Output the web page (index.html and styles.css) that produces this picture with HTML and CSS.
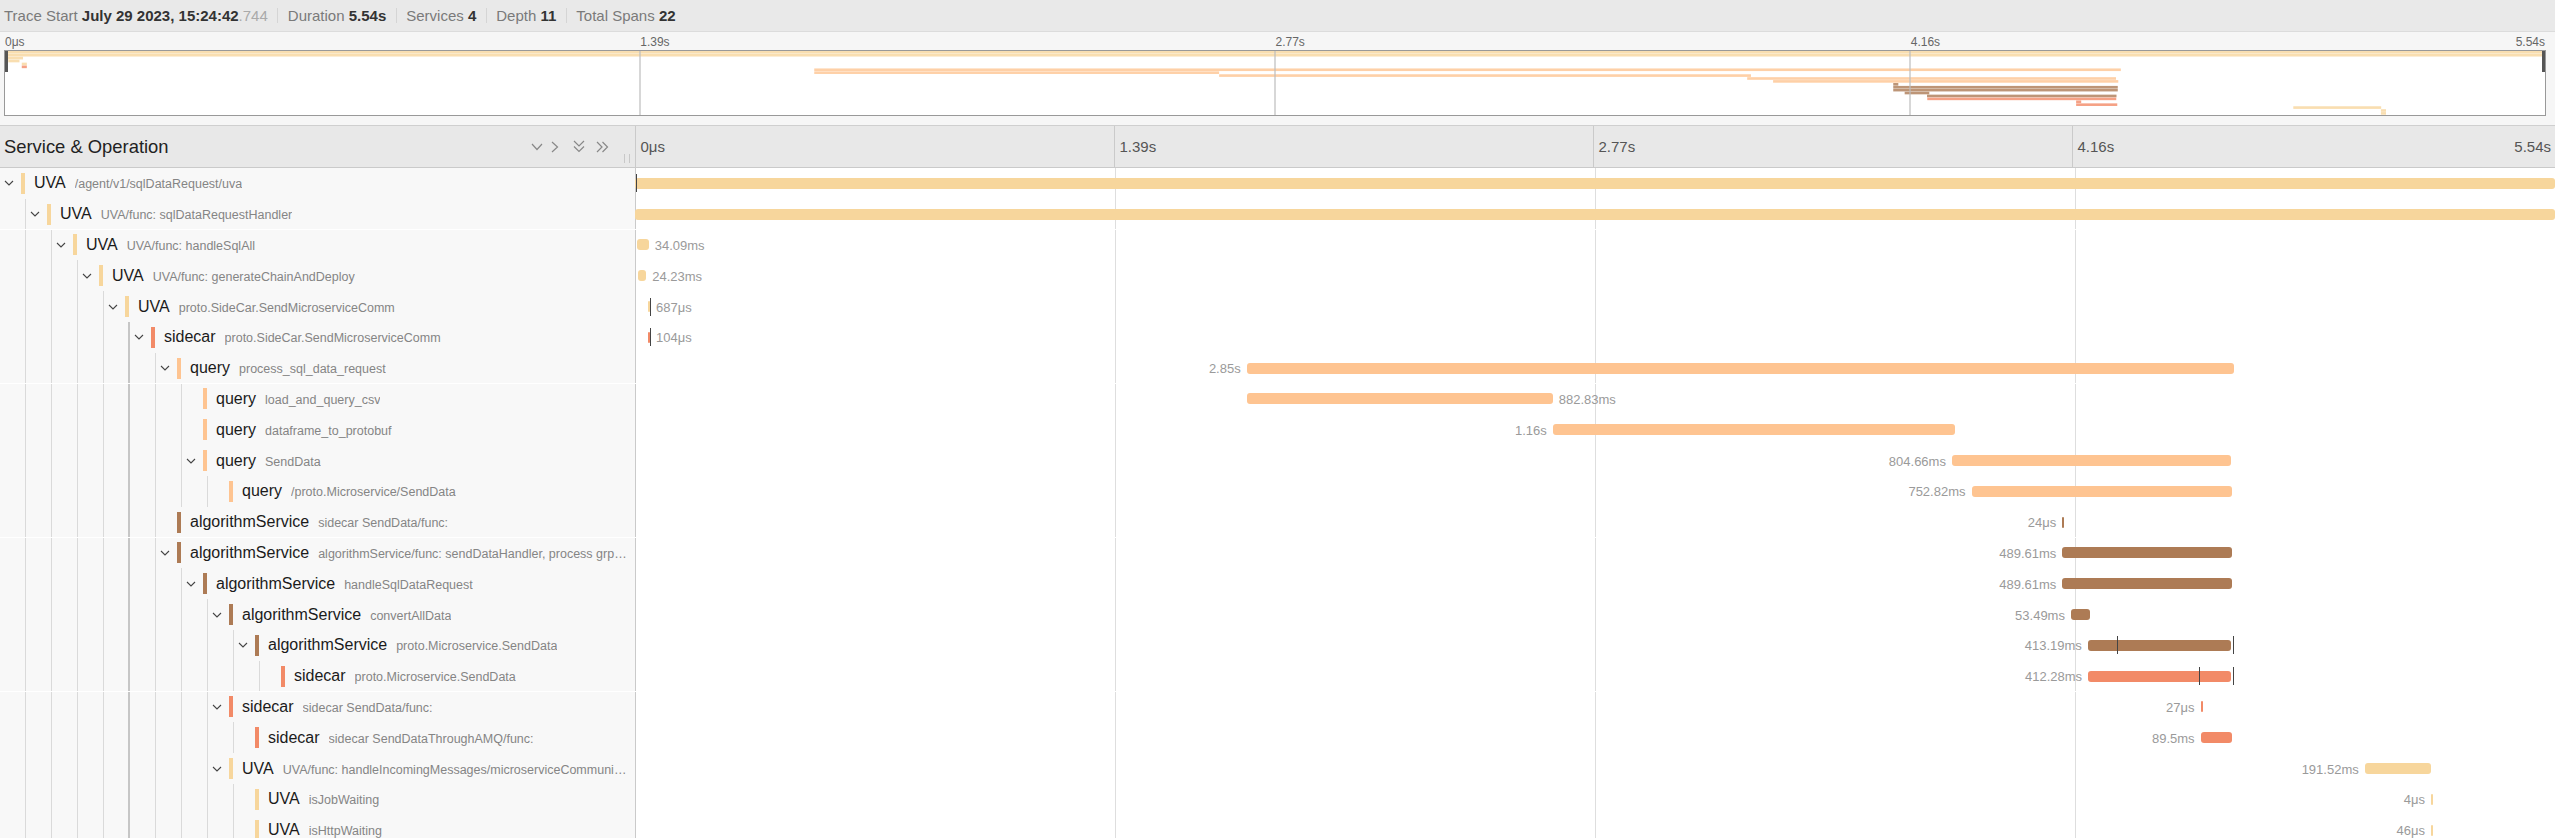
FILE: index.html
```html
<!DOCTYPE html>
<html>
<head>
<meta charset="utf-8">
<title>Trace</title>
<link rel="stylesheet" href="styles.css">
</head>
<body>
<header class="trace-header">
  <div class="hitem">Trace Start <b>July 29 2023, 15:24:42</b><span class="ms">.744</span></div>
  <div class="hitem">Duration <b>5.54s</b></div>
  <div class="hitem">Services <b>4</b></div>
  <div class="hitem">Depth <b>11</b></div>
  <div class="hitem">Total Spans <b>22</b></div>
</header>

<section class="minimap">
  <div class="mm-ticks">
    <div class="mm-tick">0μs</div>
    <div class="mm-tick">1.39s</div>
    <div class="mm-tick">2.77s</div>
    <div class="mm-tick last"><span>4.16s</span><span>5.54s</span></div>
  </div>
  <div class="mm-box">
    <svg viewBox="0 0 1000 22" preserveAspectRatio="none">
      <g fill-opacity="0.8">
        <rect class="c-uva" x="0" y="0" width="1000" height="0.9"/>
        <rect class="c-uva" x="0" y="1" width="1000" height="0.9"/>
        <rect class="c-uva" x="0.9" y="2" width="6.2" height="0.9"/>
        <rect class="c-uva" x="1.3" y="3" width="4.4" height="0.9"/>
        <rect class="c-uva" x="6.6" y="4" width="2" height="0.9"/>
        <rect class="c-sidecar" x="6.6" y="5" width="2" height="0.9"/>
        <rect class="c-query" x="318.6" y="6" width="514.4" height="0.9"/>
        <rect class="c-query" x="318.6" y="7" width="159.4" height="0.9"/>
        <rect class="c-query" x="478" y="8" width="209.4" height="0.9"/>
        <rect class="c-query" x="685.9" y="9" width="145.2" height="0.9"/>
        <rect class="c-query" x="696.1" y="10" width="135.9" height="0.9"/>
        <rect class="c-algo" x="743.4" y="11" width="2" height="0.9"/>
        <rect class="c-algo" x="743.4" y="12" width="88.4" height="0.9"/>
        <rect class="c-algo" x="743.4" y="13" width="88.4" height="0.9"/>
        <rect class="c-algo" x="747.9" y="14" width="9.7" height="0.9"/>
        <rect class="c-algo" x="756.7" y="15" width="74.6" height="0.9"/>
        <rect class="c-sidecar" x="756.8" y="16" width="74.4" height="0.9"/>
        <rect class="c-sidecar" x="815.4" y="17" width="2" height="0.9"/>
        <rect class="c-sidecar" x="815.4" y="18" width="16.2" height="0.9"/>
        <rect class="c-uva" x="900.9" y="19" width="34.6" height="0.9"/>
        <rect class="c-uva" x="935.4" y="20" width="2" height="0.9"/>
        <rect class="c-uva" x="935.4" y="21" width="2" height="0.9"/>
      </g>
      <g class="mm-grid">
        <line x1="250" y1="0" x2="250" y2="22"/>
        <line x1="500" y1="0" x2="500" y2="22"/>
        <line x1="750" y1="0" x2="750" y2="22"/>
      </g>
    </svg>
    <span class="mm-handle left"></span>
    <span class="mm-handle right"></span>
  </div>
</section>

<div class="col-header">
  <div class="ch-name">
    <span class="ch-title">Service &amp; Operation</span>
    <div class="ch-tools">
      <svg class="ico i-down" viewBox="0 0 12 8"><polyline points="1,1 6,6.5 11,1"/></svg>
      <svg class="ico i-right" viewBox="0 0 8 12"><polyline points="1,1 6.5,6 1,11"/></svg>
      <svg class="ico i-ddown" viewBox="0 0 12 13"><polyline points="1,1 6,6 11,1"/><polyline points="1,6.5 6,11.5 11,6.5"/></svg>
      <svg class="ico i-dright" viewBox="0 0 13 12"><polyline points="1,1 6,6 1,11"/><polyline points="6.5,1 11.5,6 6.5,11"/></svg>
      <span class="resizer"></span>
    </div>
  </div>
  <div class="ch-ticks">
    <div class="tick">0μs</div>
    <div class="tick">1.39s</div>
    <div class="tick">2.77s</div>
    <div class="tick last"><span>4.16s</span><span>5.54s</span></div>
  </div>
</div>

<main class="rows">
  <!-- 1 -->
  <div class="row">
    <div class="name">
      <span class="tg"><svg class="chev" viewBox="0 0 10 6"><polyline points="1,1 5,5 9,1"/></svg></span>
      <span class="sb c-uva"></span>
      <span class="lab"><span class="svc">UVA</span><span class="op">/agent/v1/sqlDataRequest/uva</span></span>
    </div>
    <div class="tl">
      <div class="span" style="left:0%;width:100%"><span class="bar c-uva"></span></div>
      <i class="mark" style="left:0.05%"></i>
    </div>
  </div>
  <!-- 2 -->
  <div class="row sep">
    <div class="name">
      <i class="g"></i>
      <span class="tg"><svg class="chev" viewBox="0 0 10 6"><polyline points="1,1 5,5 9,1"/></svg></span>
      <span class="sb c-uva"></span>
      <span class="lab"><span class="svc">UVA</span><span class="op">UVA/func: sqlDataRequestHandler</span></span>
    </div>
    <div class="tl">
      <div class="span" style="left:0%;width:100%"><span class="bar c-uva"></span></div>
    </div>
  </div>
  <!-- 3 -->
  <div class="row">
    <div class="name">
      <i class="g"></i><i class="g"></i>
      <span class="tg"><svg class="chev" viewBox="0 0 10 6"><polyline points="1,1 5,5 9,1"/></svg></span>
      <span class="sb c-uva"></span>
      <span class="lab"><span class="svc">UVA</span><span class="op">UVA/func: handleSqlAll</span></span>
    </div>
    <div class="tl">
      <div class="span" style="left:0.1%;width:0.615%"><span class="bar c-uva"></span><span class="dur r">34.09ms</span></div>
    </div>
  </div>
  <!-- 4 -->
  <div class="row">
    <div class="name">
      <i class="g"></i><i class="g"></i><i class="g"></i>
      <span class="tg"><svg class="chev" viewBox="0 0 10 6"><polyline points="1,1 5,5 9,1"/></svg></span>
      <span class="sb c-uva"></span>
      <span class="lab"><span class="svc">UVA</span><span class="op">UVA/func: generateChainAndDeploy</span></span>
    </div>
    <div class="tl">
      <div class="span" style="left:0.15%;width:0.437%"><span class="bar c-uva"></span><span class="dur r">24.23ms</span></div>
    </div>
  </div>
  <!-- 5 -->
  <div class="row">
    <div class="name">
      <i class="g"></i><i class="g"></i><i class="g"></i><i class="g"></i>
      <span class="tg"><svg class="chev" viewBox="0 0 10 6"><polyline points="1,1 5,5 9,1"/></svg></span>
      <span class="sb c-uva"></span>
      <span class="lab"><span class="svc">UVA</span><span class="op">proto.SideCar.SendMicroserviceComm</span></span>
    </div>
    <div class="tl">
      <div class="span" style="left:0.68%;width:0.012%"><span class="bar c-uva"></span><span class="dur r">687μs</span></div>
      <i class="mark" style="left:0.8%"></i>
    </div>
  </div>
  <!-- 6 -->
  <div class="row">
    <div class="name">
      <i class="g"></i><i class="g"></i><i class="g"></i><i class="g"></i><i class="g hl"></i>
      <span class="tg"><svg class="chev" viewBox="0 0 10 6"><polyline points="1,1 5,5 9,1"/></svg></span>
      <span class="sb c-sidecar"></span>
      <span class="lab"><span class="svc">sidecar</span><span class="op">proto.SideCar.SendMicroserviceComm</span></span>
    </div>
    <div class="tl">
      <div class="span" style="left:0.68%;width:0.002%"><span class="bar c-sidecar"></span><span class="dur r">104μs</span></div>
      <i class="mark" style="left:0.8%"></i>
    </div>
  </div>
  <!-- 7 -->
  <div class="row sep">
    <div class="name">
      <i class="g"></i><i class="g"></i><i class="g"></i><i class="g"></i><i class="g hl"></i><i class="g"></i>
      <span class="tg"><svg class="chev" viewBox="0 0 10 6"><polyline points="1,1 5,5 9,1"/></svg></span>
      <span class="sb c-query"></span>
      <span class="lab"><span class="svc">query</span><span class="op">process_sql_data_request</span></span>
    </div>
    <div class="tl">
      <div class="span" style="left:31.86%;width:51.44%"><span class="bar c-query"></span><span class="dur l">2.85s</span></div>
    </div>
  </div>
  <!-- 8 -->
  <div class="row">
    <div class="name">
      <i class="g"></i><i class="g"></i><i class="g"></i><i class="g"></i><i class="g hl"></i><i class="g"></i><i class="g"></i>
      <span class="tg"></span>
      <span class="sb c-query"></span>
      <span class="lab"><span class="svc">query</span><span class="op">load_and_query_csv</span></span>
    </div>
    <div class="tl">
      <div class="span" style="left:31.86%;width:15.94%"><span class="bar c-query"></span><span class="dur r">882.83ms</span></div>
    </div>
  </div>
  <!-- 9 -->
  <div class="row">
    <div class="name">
      <i class="g"></i><i class="g"></i><i class="g"></i><i class="g"></i><i class="g hl"></i><i class="g"></i><i class="g"></i>
      <span class="tg"></span>
      <span class="sb c-query"></span>
      <span class="lab"><span class="svc">query</span><span class="op">dataframe_to_protobuf</span></span>
    </div>
    <div class="tl">
      <div class="span" style="left:47.8%;width:20.94%"><span class="bar c-query"></span><span class="dur l">1.16s</span></div>
    </div>
  </div>
  <!-- 10 -->
  <div class="row">
    <div class="name">
      <i class="g"></i><i class="g"></i><i class="g"></i><i class="g"></i><i class="g hl"></i><i class="g"></i><i class="g"></i>
      <span class="tg"><svg class="chev" viewBox="0 0 10 6"><polyline points="1,1 5,5 9,1"/></svg></span>
      <span class="sb c-query"></span>
      <span class="lab"><span class="svc">query</span><span class="op">SendData</span></span>
    </div>
    <div class="tl">
      <div class="span" style="left:68.59%;width:14.52%"><span class="bar c-query"></span><span class="dur l">804.66ms</span></div>
    </div>
  </div>
  <!-- 11 -->
  <div class="row">
    <div class="name">
      <i class="g"></i><i class="g"></i><i class="g"></i><i class="g"></i><i class="g hl"></i><i class="g"></i><i class="g"></i><i class="g"></i>
      <span class="tg"></span>
      <span class="sb c-query"></span>
      <span class="lab"><span class="svc">query</span><span class="op">/proto.Microservice/SendData</span></span>
    </div>
    <div class="tl">
      <div class="span" style="left:69.61%;width:13.59%"><span class="bar c-query"></span><span class="dur l">752.82ms</span></div>
    </div>
  </div>
  <!-- 12 -->
  <div class="row sep">
    <div class="name">
      <i class="g"></i><i class="g"></i><i class="g"></i><i class="g"></i><i class="g hl"></i><i class="g"></i>
      <span class="tg"></span>
      <span class="sb c-algo"></span>
      <span class="lab"><span class="svc">algorithmService</span><span class="op">sidecar SendData/func:</span></span>
    </div>
    <div class="tl">
      <div class="span" style="left:74.34%;width:0.0004%"><span class="bar c-algo"></span><span class="dur l">24μs</span></div>
    </div>
  </div>
  <!-- 13 -->
  <div class="row">
    <div class="name">
      <i class="g"></i><i class="g"></i><i class="g"></i><i class="g"></i><i class="g hl"></i><i class="g"></i>
      <span class="tg"><svg class="chev" viewBox="0 0 10 6"><polyline points="1,1 5,5 9,1"/></svg></span>
      <span class="sb c-algo"></span>
      <span class="lab"><span class="svc">algorithmService</span><span class="op">algorithmService/func: sendDataHandler, process grpc request</span></span>
    </div>
    <div class="tl">
      <div class="span" style="left:74.34%;width:8.84%"><span class="bar c-algo"></span><span class="dur l">489.61ms</span></div>
    </div>
  </div>
  <!-- 14 -->
  <div class="row">
    <div class="name">
      <i class="g"></i><i class="g"></i><i class="g"></i><i class="g"></i><i class="g hl"></i><i class="g"></i><i class="g"></i>
      <span class="tg"><svg class="chev" viewBox="0 0 10 6"><polyline points="1,1 5,5 9,1"/></svg></span>
      <span class="sb c-algo"></span>
      <span class="lab"><span class="svc">algorithmService</span><span class="op">handleSqlDataRequest</span></span>
    </div>
    <div class="tl">
      <div class="span" style="left:74.34%;width:8.84%"><span class="bar c-algo"></span><span class="dur l">489.61ms</span></div>
    </div>
  </div>
  <!-- 15 -->
  <div class="row">
    <div class="name">
      <i class="g"></i><i class="g"></i><i class="g"></i><i class="g"></i><i class="g hl"></i><i class="g"></i><i class="g"></i><i class="g"></i>
      <span class="tg"><svg class="chev" viewBox="0 0 10 6"><polyline points="1,1 5,5 9,1"/></svg></span>
      <span class="sb c-algo"></span>
      <span class="lab"><span class="svc">algorithmService</span><span class="op">convertAllData</span></span>
    </div>
    <div class="tl">
      <div class="span" style="left:74.79%;width:0.966%"><span class="bar c-algo"></span><span class="dur l">53.49ms</span></div>
    </div>
  </div>
  <!-- 16 -->
  <div class="row">
    <div class="name">
      <i class="g"></i><i class="g"></i><i class="g"></i><i class="g"></i><i class="g hl"></i><i class="g"></i><i class="g"></i><i class="g"></i><i class="g"></i>
      <span class="tg"><svg class="chev" viewBox="0 0 10 6"><polyline points="1,1 5,5 9,1"/></svg></span>
      <span class="sb c-algo"></span>
      <span class="lab"><span class="svc">algorithmService</span><span class="op">proto.Microservice.SendData</span></span>
    </div>
    <div class="tl">
      <div class="span" style="left:75.67%;width:7.458%"><span class="bar c-algo"></span><span class="dur l">413.19ms</span></div>
      <i class="mark" style="left:77.2%"></i>
      <i class="mark" style="left:83.22%"></i>
    </div>
  </div>
  <!-- 17 -->
  <div class="row sep">
    <div class="name">
      <i class="g"></i><i class="g"></i><i class="g"></i><i class="g"></i><i class="g hl"></i><i class="g"></i><i class="g"></i><i class="g"></i><i class="g"></i><i class="g"></i>
      <span class="tg"></span>
      <span class="sb c-sidecar"></span>
      <span class="lab"><span class="svc">sidecar</span><span class="op">proto.Microservice.SendData</span></span>
    </div>
    <div class="tl">
      <div class="span" style="left:75.68%;width:7.44%"><span class="bar c-sidecar"></span><span class="dur l">412.28ms</span></div>
      <i class="mark" style="left:81.44%"></i>
      <i class="mark" style="left:83.22%"></i>
    </div>
  </div>
  <!-- 18 -->
  <div class="row">
    <div class="name">
      <i class="g"></i><i class="g"></i><i class="g"></i><i class="g"></i><i class="g hl"></i><i class="g"></i><i class="g"></i><i class="g"></i>
      <span class="tg"><svg class="chev" viewBox="0 0 10 6"><polyline points="1,1 5,5 9,1"/></svg></span>
      <span class="sb c-sidecar"></span>
      <span class="lab"><span class="svc">sidecar</span><span class="op">sidecar SendData/func:</span></span>
    </div>
    <div class="tl">
      <div class="span" style="left:81.54%;width:0.0005%"><span class="bar c-sidecar"></span><span class="dur l">27μs</span></div>
    </div>
  </div>
  <!-- 19 -->
  <div class="row">
    <div class="name">
      <i class="g"></i><i class="g"></i><i class="g"></i><i class="g"></i><i class="g hl"></i><i class="g"></i><i class="g"></i><i class="g"></i><i class="g"></i>
      <span class="tg"></span>
      <span class="sb c-sidecar"></span>
      <span class="lab"><span class="svc">sidecar</span><span class="op">sidecar SendDataThroughAMQ/func:</span></span>
    </div>
    <div class="tl">
      <div class="span" style="left:81.54%;width:1.616%"><span class="bar c-sidecar"></span><span class="dur l">89.5ms</span></div>
    </div>
  </div>
  <!-- 20 -->
  <div class="row">
    <div class="name">
      <i class="g"></i><i class="g"></i><i class="g"></i><i class="g"></i><i class="g hl"></i><i class="g"></i><i class="g"></i><i class="g"></i>
      <span class="tg"><svg class="chev" viewBox="0 0 10 6"><polyline points="1,1 5,5 9,1"/></svg></span>
      <span class="sb c-uva"></span>
      <span class="lab"><span class="svc">UVA</span><span class="op">UVA/func: handleIncomingMessages/microserviceCommunication</span></span>
    </div>
    <div class="tl">
      <div class="span" style="left:90.09%;width:3.457%"><span class="bar c-uva"></span><span class="dur l">191.52ms</span></div>
    </div>
  </div>
  <!-- 21 -->
  <div class="row">
    <div class="name">
      <i class="g"></i><i class="g"></i><i class="g"></i><i class="g"></i><i class="g hl"></i><i class="g"></i><i class="g"></i><i class="g"></i><i class="g"></i>
      <span class="tg"></span>
      <span class="sb c-uva"></span>
      <span class="lab"><span class="svc">UVA</span><span class="op">isJobWaiting</span></span>
    </div>
    <div class="tl">
      <div class="span" style="left:93.54%;width:0.0001%"><span class="bar c-uva"></span><span class="dur l">4μs</span></div>
    </div>
  </div>
  <!-- 22 -->
  <div class="row">
    <div class="name">
      <i class="g"></i><i class="g"></i><i class="g"></i><i class="g"></i><i class="g hl"></i><i class="g"></i><i class="g"></i><i class="g"></i><i class="g"></i>
      <span class="tg"></span>
      <span class="sb c-uva"></span>
      <span class="lab"><span class="svc">UVA</span><span class="op">isHttpWaiting</span></span>
    </div>
    <div class="tl">
      <div class="span" style="left:93.54%;width:0.0008%"><span class="bar c-uva"></span><span class="dur l">46μs</span></div>
    </div>
  </div>
</main>
</body>
</html>
```

FILE: styles.css
```css
* { box-sizing: border-box; }

html, body {
  margin: 0;
  padding: 0;
  height: 100%;
  overflow: hidden;
}

body {
  font-family: "Liberation Sans", Arial, Helvetica, sans-serif;
  color: #333;
  background: #fff;
}

/* span colours */
.c-uva { background: #f7d69c; fill: #f7d69c; }
.c-query { background: #fec491; fill: #fec491; }
.c-algo { background: #ad7b55; fill: #ad7b55; }
.c-sidecar { background: #f28a67; fill: #f28a67; }

/* ---------- trace header ---------- */
.trace-header {
  display: flex;
  align-items: center;
  height: 32px;
  padding-left: 4px;
  background: #e9e9e9;
  border-bottom: 1px solid #dcdcdc;
  font-size: 15px;
  color: #7a7a7a;
  white-space: nowrap;
}

.hitem {
  padding: 0 9.5px;
  line-height: 15px;
}

.hitem:first-child { padding-left: 0; }

.hitem + .hitem { border-left: 1px solid #d5d5d5; }

.hitem b {
  color: #333;
  font-weight: bold;
}

.hitem .ms { color: #aaa; }

/* ---------- minimap ---------- */
.minimap {
  background: #f6f6f6;
  padding: 0 9px 9px 4px;
  border-bottom: 1px solid #cfcfcf;
}

.mm-ticks {
  display: flex;
  height: 18px;
  padding-top: 3px;
  font-size: 12px;
  line-height: 15px;
  color: #666;
}

.mm-tick {
  flex: 1;
  padding-left: 1px;
}

.mm-tick.last {
  display: flex;
  justify-content: space-between;
  padding-right: 1px;
}

.mm-box {
  position: relative;
  height: 66px;
  border: 1px solid #999;
  background: #fff;
}

.mm-box svg {
  display: block;
  width: 100%;
  height: 100%;
}

.mm-grid line {
  stroke: #bdbdbd;
  stroke-width: 1.2;
  vector-effect: non-scaling-stroke;
}

.mm-handle {
  position: absolute;
  top: 0;
  width: 3px;
  height: 21px;
  background: #555;
}

.mm-handle.left { left: 0; }
.mm-handle.right { right: 0; }

/* ---------- column header ---------- */
.col-header {
  display: grid;
  grid-template-columns: 635px 1fr;
  height: 42px;
  background: #e8e8e8;
  border-bottom: 1px solid #cacaca;
}

.ch-name {
  display: flex;
  align-items: center;
  justify-content: space-between;
  padding-left: 4px;
  padding-right: 5px;
}

.ch-title {
  font-size: 18.4px;
  color: #222;
}

.ch-tools {
  display: flex;
  align-items: center;
  align-self: stretch;
}

.ico {
  display: block;
  fill: none;
  stroke: #888;
  stroke-width: 1.2;
}

.i-down { width: 12px; height: 8px; margin-right: 7.7px; }
.i-right { width: 8px; height: 12px; margin-right: 14px; }
.i-ddown { width: 12px; height: 13px; margin-right: 11.3px; }
.i-dright { width: 13px; height: 12px; margin-right: 15px; }

.resizer {
  align-self: flex-end;
  margin-bottom: 4px;
  width: 6px;
  height: 9px;
  border-left: 1px solid #c8c8c8;
  border-right: 1px solid #c8c8c8;
}

.ch-ticks {
  display: flex;
  font-size: 15px;
  color: #555;
  line-height: 41px;
}

.tick {
  flex: 1;
  padding-left: 4.5px;
  border-left: 1px solid #cacaca;
}

.tick.last {
  display: flex;
  justify-content: space-between;
  padding-right: 4px;
}

/* ---------- rows ---------- */
.row {
  position: relative;
  display: grid;
  grid-template-columns: 635px 1fr;
  height: 30.8px;
}

.row.sep::after {
  content: "";
  position: absolute;
  left: 0;
  right: 0;
  bottom: 0;
  height: 1px;
  background: #fff;
}

.name {
  display: flex;
  align-items: center;
  min-width: 0;
  overflow: hidden;
  padding-right: 5px;
  background: #f8f8f8;
}

.g {
  flex: none;
  width: 26px;
  align-self: stretch;
  border-right: 1px solid #dadada;
}

.g.hl { border-right: 2px solid #c6c6c6; }

.tg {
  flex: none;
  width: 18px;
  display: flex;
  align-items: center;
  justify-content: center;
}

.chev {
  display: block;
  width: 10px;
  height: 6px;
  fill: none;
  stroke: #444;
  stroke-width: 1.1;
}

.sb {
  flex: none;
  width: 4px;
  height: 21px;
  margin-left: 3px;
}

.lab {
  display: flex;
  align-items: baseline;
  min-width: 0;
  margin-left: 9px;
  white-space: nowrap;
}

.svc {
  flex: none;
  font-size: 16px;
  color: #1b1b1b;
}

.op {
  min-width: 0;
  margin-left: 9px;
  font-size: 12.5px;
  color: #858585;
  overflow: hidden;
  text-overflow: ellipsis;
}

.tl {
  position: relative;
  background:
    linear-gradient(to right, #cacaca 1px, transparent 1px) 0 0 / 100% 100% no-repeat,
    linear-gradient(to right, #dedede 1px, transparent 1px) 0 0 / 25% 100% repeat-x,
    #fff;
}

.span {
  position: absolute;
  top: calc(50% - 5.5px);
  height: 11px;
  min-width: 2px;
}

.bar {
  display: block;
  height: 100%;
  border-radius: 3px;
}

.dur {
  position: absolute;
  top: 50%;
  transform: translateY(-50%);
  font-size: 13px;
  color: #9a9a9a;
  white-space: nowrap;
}

.dur.r { left: calc(100% + 6px); }
.dur.l { right: calc(100% + 6px); }

.mark {
  position: absolute;
  top: calc(50% - 9px);
  width: 1px;
  height: 18px;
  background: #444;
}
```
